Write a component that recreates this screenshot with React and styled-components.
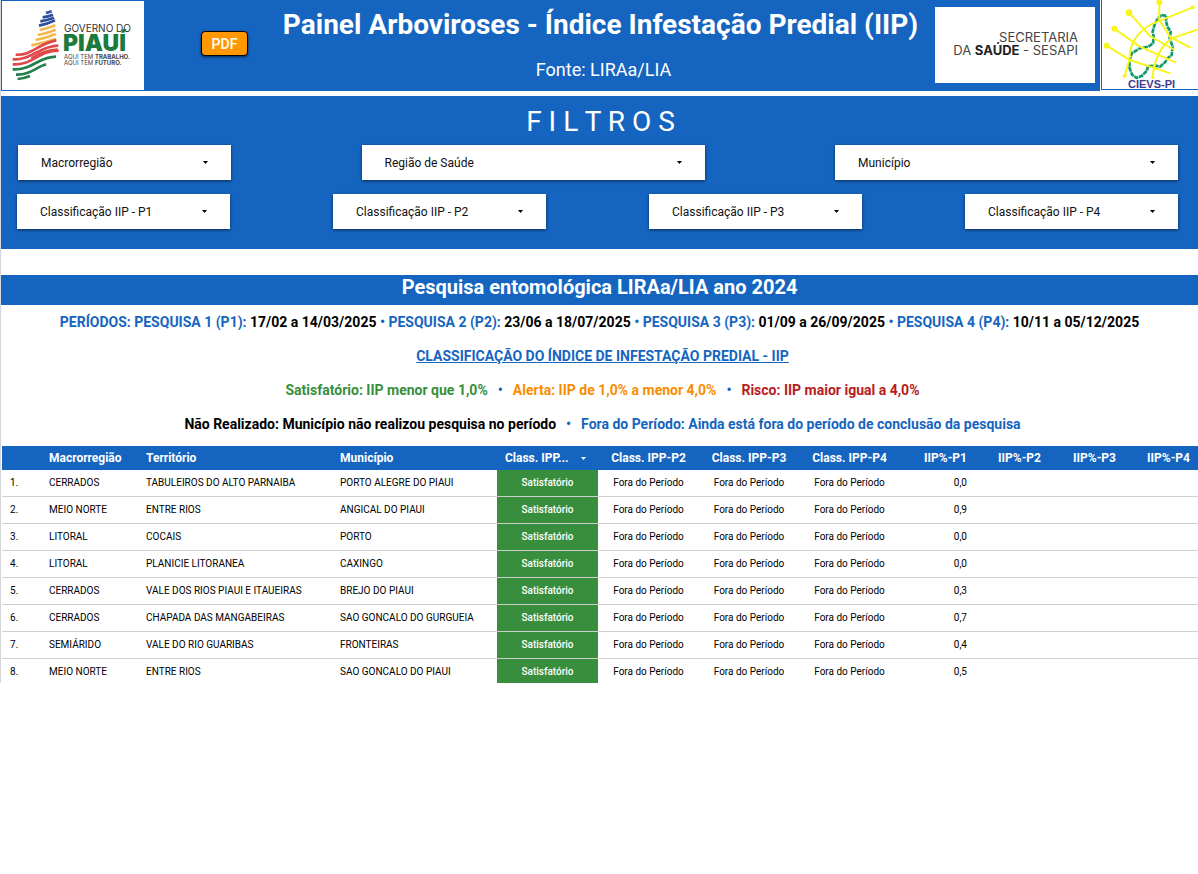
import React from 'react'
import styled, { createGlobalStyle } from 'styled-components'

const topFilters = [
    { id: 'macro', label: 'Macrorregião' },
    { id: 'regiao', label: 'Região de Saúde', wide: true },
    { id: 'municipio', label: 'Município', wide: true },
]
const classFilters = [
    { id: 'p1', label: 'Classificação IIP - P1' },
    { id: 'p2', label: 'Classificação IIP - P2' },
    { id: 'p3', label: 'Classificação IIP - P3' },
    { id: 'p4', label: 'Classificação IIP - P4' },
]
const periods = [
    { name: 'PERÍODOS: PESQUISA 1 (P1):', dates: '17/02 a 14/03/2025' },
    { name: 'PESQUISA 2 (P2):', dates: '23/06 a 18/07/2025' },
    { name: 'PESQUISA 3 (P3):', dates: '01/09 a 26/09/2025' },
    { name: 'PESQUISA 4 (P4):', dates: '10/11 a 05/12/2025' },
]
const columnWidths = [39, 97, 194, 165, 101, 101, 100, 101, 75, 74, 75, 74]
const rows = [
    ['CERRADOS', 'TABULEIROS DO ALTO PARNAIBA', 'PORTO ALEGRE DO PIAUI', '0,0'],
    ['MEIO NORTE', 'ENTRE RIOS', 'ANGICAL DO PIAUI', '0,9'],
    ['LITORAL', 'COCAIS', 'PORTO', '0,0'],
    ['LITORAL', 'PLANICIE LITORANEA', 'CAXINGO', '0,0'],
    ['CERRADOS', 'VALE DOS RIOS PIAUI E ITAUEIRAS', 'BREJO DO PIAUI', '0,3'],
    ['CERRADOS', 'CHAPADA DAS MANGABEIRAS', 'SAO GONCALO DO GURGUEIA', '0,7'],
    ['SEMIÁRIDO', 'VALE DO RIO GUARIBAS', 'FRONTEIRAS', '0,4'],
    ['MEIO NORTE', 'ENTRE RIOS', 'SAO GONCALO DO PIAUI', '0,5'],
]

function PiauiLogo() {
    return (
        <svg width="142" height="89" viewBox="2 1 142 89" role="img" aria-label="Governo do Piauí">
            <g fill="none" strokeWidth="8" transform="translate(5 5) scale(.3333)">
                <path stroke="#2b4f9e" d="M123 24l17-5M113 37q16-2 31-8M106 49q20-3 41-11M102 62q25-5 48-16" />
                <path stroke="#f2b84b" d="M104 75q23-4 47-14M98 90q28-5 54-16M92 105q32-6 60-18M79 121q38-7 74-20" />
                <path stroke="#e0494a" d="M32 149c50 3 70-35 122-43M23 163c52 5 80-40 137-41M23 178c55 5 80-42 138-41" />
                <path stroke="#e0494a" d="M79 160q40-24 79-26" />
                <path stroke="#23804a" d="M23 193c56 4 78-38 130-38M33 209c40 2 60-22 90-31M38 222q18-1 37-9" />
            </g>
            <text x="64" y="32" fontFamily="Inter, sans-serif" fontSize="10" fontWeight="400" fill="#333">GOVERNO DO</text>
            <text x="63" y="51" fontFamily="Inter, sans-serif" fontSize="23" fontWeight="900" fill="#1b7a3d">PIAUÍ</text>
            <g fontFamily="Inter, sans-serif" fontSize="6" fill="#444">
                <text x="64" y="59">AQUI TEM <tspan fontWeight="700">TRABALHO.</tspan></text>
                <text x="64" y="65">AQUI TEM <tspan fontWeight="700">FUTURO.</tspan></text>
            </g>
        </svg>
    )
}

function CievsLogo() {
    return (
        <svg width="96" height="89" viewBox="1102 0 96 89" role="img" aria-label="CIEVS-PI">
            <g transform="translate(1100 0) scale(.3333)">
                <path
                    fill="none"
                    stroke="#119a6a"
                    strokeWidth="8"
                    strokeDasharray="14 2"
                    strokeLinejoin="round"
                    d="M185 45l15 3-2 14 4 18 10 15-3 20 9 25-3 25-12 10-8 12-15 13-14-3-22 1-3 14-16 16-15 6-14-10-8-22 1-22 6-20 24-15 26-5 14-10 2-18-3-17 6-22 10-18z"
                />
                <g fill="none" stroke="#f8f41d" strokeWidth="6">
                    <path d="M87 38l63 70 74 42M43 86l77 54 108 48M20 137l70 43 122 40M178 7v53l32 50 62 34" />
                    <path d="M278 22l-88 36q-100 32-102 120l-14 50M294 88l-79 27q-50 36-57 117" />
                </g>
                <g fill="#f8f41d">
                    <circle cx="87" cy="38" r="10" />
                    <circle cx="43" cy="86" r="9" />
                    <circle cx="20" cy="137" r="9" />
                    <circle cx="178" cy="7" r="9" />
                    <circle cx="278" cy="22" r="6" />
                    <circle cx="74" cy="228" r="6" />
                    <circle cx="158" cy="232" r="5" />
                </g>
            </g>
            <text x="1128" y="88" fontFamily="Liberation Sans, sans-serif" fontSize="11" fontWeight="700" fill="#433a90">CIEVS-PI</text>
        </svg>
    )
}

function Caret() {
    return (
        <svg width="5" height="3" viewBox="0 0 5 3" aria-hidden="true">
            <path fill="currentColor" d="M0 0h5L2.500 3z" />
        </svg>
    )
}

function Filter({ item }) {
    return (
        <FilterBox $wide={item.wide}>
            <select id={item.id} aria-label={item.label}>
                <option>{item.label}</option>
            </select>
            <Caret />
        </FilterBox>
    )
}

export default function App() {
    return (
        <Page>
            <GlobalStyle />
            <Header>
                <StateLogo><PiauiLogo /></StateLogo>
                <Banner>
                    <PdfButton type="button">PDF</PdfButton>
                    <Titles>
                        <h1>Painel Arboviroses - Índice Infestação Predial (IIP)</h1>
                        <p>Fonte: LIRAa/LIA</p>
                    </Titles>
                    <Secretaria>
                        <span>SECRETARIA</span>
                        <span>DA <b>SAÚDE</b> - SESAPI</span>
                    </Secretaria>
                </Banner>
                <Cievs><CievsLogo /></Cievs>
            </Header>
            <Filters>
                <h2>F I L T R O S</h2>
                <FilterRow $inset>
                    {topFilters.map(item => <Filter key={item.id} item={item} />)}
                </FilterRow>
                <FilterRow>
                    {classFilters.map(item => <Filter key={item.id} item={item} />)}
                </FilterRow>
            </Filters>
            <SectionTitle>Pesquisa entomológica LIRAa/LIA ano 2024</SectionTitle>
            <Legend>
                <p>
                    {periods.map((period, i) => (
                        <React.Fragment key={period.name}>
                            {i > 0 && ' • '}
                            {period.name} <Tone $color="#000">{period.dates}</Tone>
                        </React.Fragment>
                    ))}
                </p>
                <p><u>CLASSIFICAÇÃO DO ÍNDICE DE INFESTAÇÃO PREDIAL - IIP</u></p>
                <p>
                    <Tone $color="#388e3c">Satisfatório: IIP menor que 1,0%</Tone>
                    <Dot>•</Dot>
                    <Tone $color="#fb8c00">Alerta: IIP de 1,0% a menor 4,0%</Tone>
                    <Dot>•</Dot>
                    <Tone $color="#b71c1c">Risco: IIP maior igual a 4,0%</Tone>
                </p>
                <p>
                    <Tone $color="#000">Não Realizado: Município não realizou pesquisa no período</Tone>
                    <Dot>•</Dot>
                    Fora do Período: Ainda está fora do período de conclusão da pesquisa
                </p>
            </Legend>
            <TableWrapper>
                <Table>
                    <colgroup>
                        {columnWidths.map((width, i) => <col key={i} width={width} />)}
                    </colgroup>
                    <thead>
                        <tr>
                            <Th />
                            <Th>Macrorregião</Th>
                            <Th>Território</Th>
                            <Th>Município</Th>
                            <Th $align="center"><Sorted>Class. IPP... <Caret /></Sorted></Th>
                            <Th $align="center">Class. IPP-P2</Th>
                            <Th $align="center">Class. IPP-P3</Th>
                            <Th $align="center">Class. IPP-P4</Th>
                            <Th $align="right">IIP%-P1</Th>
                            <Th $align="right">IIP%-P2</Th>
                            <Th $align="right">IIP%-P3</Th>
                            <Th $align="right">IIP%-P4</Th>
                        </tr>
                    </thead>
                    <tbody>
                        {rows.map(([macro, territory, city, rate], i) => (
                            <tr key={city}>
                                <Td>{i + 1}.</Td>
                                <Td>{macro}</Td>
                                <Td>{territory}</Td>
                                <Td>{city}</Td>
                                <StatusTd>Satisfatório</StatusTd>
                                <Td $align="center">Fora do Período</Td>
                                <Td $align="center">Fora do Período</Td>
                                <Td $align="center">Fora do Período</Td>
                                <Td $align="right">{rate}</Td>
                                <Td />
                                <Td />
                                <Td />
                            </tr>
                        ))}
                    </tbody>
                </Table>
            </TableWrapper>
        </Page>
    )
}

const GlobalStyle = createGlobalStyle`
* {
    box-sizing:border-box;
}
body {
    margin:0;
    background:#fff;
    color:#000;
    font-family:Roboto, sans-serif;
}
h1, h2, p {
    margin:0;
}
`
const Page = styled.main`
border-left:1px solid #d5d7dc;
`
const Header = styled.header`
display:flex;
height:91px;
margin-bottom:5px;
`
const StateLogo = styled.div`
flex:none;
background:#fff;
border:1px solid #1565c0;
border-width:1px 0 1px 1px;
svg{
    display:block;
}
`
const Banner = styled.div`
flex:1;
display:flex;
align-items:flex-start;
background:#1565c0;
color:#fff;
padding:7px 5px 0 57px;
`
const PdfButton = styled.button`
width:47px;
height:25px;
margin-top:24px;
padding:0;
border:1px solid #000;
border-radius:4px;
background:#ff9800;
color:#fff;
font:500 14px Roboto, sans-serif;
box-shadow:0 1px 3px rgba(0,0,0,.6);
`
const Titles = styled.div`
flex:1;
text-align:center;
padding-left:18px;
h1{
    font-size:28px;
    font-weight:700;
    line-height:36px;
}
p{
    font-size:18px;
    line-height:24px;
    margin-top:15px;
    padding-left:6px;
}
`
const Secretaria = styled.div`
width:160px;
height:76px;
display:flex;
flex-direction:column;
align-items:flex-end;
justify-content:center;
padding:0 17px 2px 0;
background:#fff;
color:#444;
font:400 13px/13px Inter, sans-serif;
b{
    color:#222;
    font-weight:700;
}
`
const Cievs = styled.div`
flex:none;
height:90px;
margin-left:1px;
border-left:1px solid #1565c0;
border-bottom:1px solid #1565c0;
svg{
    display:block;
}
`
const Filters = styled.section`
padding:8px 20px 20px 16px;
background:#1565c0;
h2{
    color:#fff;
    font-size:28px;
    font-weight:400;
    line-height:36px;
    text-align:center;
    padding-left:6px;
    margin-bottom:5px;
}
`
const FilterRow = styled.div`
display:flex;
flex-wrap:wrap;
justify-content:space-between;
gap:14px;
padding-left:${props => (props.$inset ? '1px' : '0')};
& + &{
    margin-top:14px;
}
`
const FilterBox = styled.div`
display:flex;
align-items:center;
position:relative;
width:${props => (props.$wide ? '343px' : '213px')};
height:35px;
background:#fff;
box-shadow:0 1px 3px rgba(0,0,0,.6);
select{
    appearance:none;
    width:100%;
    height:100%;
    padding:0 40px 0 23px;
    border:none;
    background:none;
    color:#111;
    font:400 12px Roboto, sans-serif;
}
svg{
    position:absolute;
    right:23px;
    pointer-events:none;
}
`
const SectionTitle = styled.h2`
height:30px;
margin-top:26px;
background:#1565c0;
color:#fff;
font-size:20px;
font-weight:700;
line-height:24px;
text-align:center;
`
const Legend = styled.section`
padding-bottom:5px;
color:#1565c0;
font-size:14px;
font-weight:700;
line-height:34px;
text-align:center;
p + p{
    padding-left:6px;
}
`
const Tone = styled.span`
color:${props => props.$color};
`
const Dot = styled.span`
margin:0 10px;
`
const TableWrapper = styled.div`
height:237px;
margin-left:1px;
overflow:hidden;
`
const Table = styled.table`
width:100%;
table-layout:fixed;
border-collapse:separate;
border-spacing:0;
`
const Th = styled.th`
height:24px;
padding:0 8px;
background:#1565c0;
color:#fff;
font-size:12px;
font-weight:700;
text-align:${props => props.$align || 'left'};
white-space:nowrap;
`
const Sorted = styled.span`
display:flex;
align-items:center;
justify-content:space-between;
padding-right:4px;
`
const Td = styled.td`
height:27px;
padding:0 8px 2px;
border-bottom:1px solid #d0d0d0;
font-size:10px;
text-align:${props => props.$align || 'left'};
white-space:nowrap;
`
const StatusTd = styled(Td)`
background:#388e3c;
color:#fff;
font-weight:500;
text-align:center;
`
